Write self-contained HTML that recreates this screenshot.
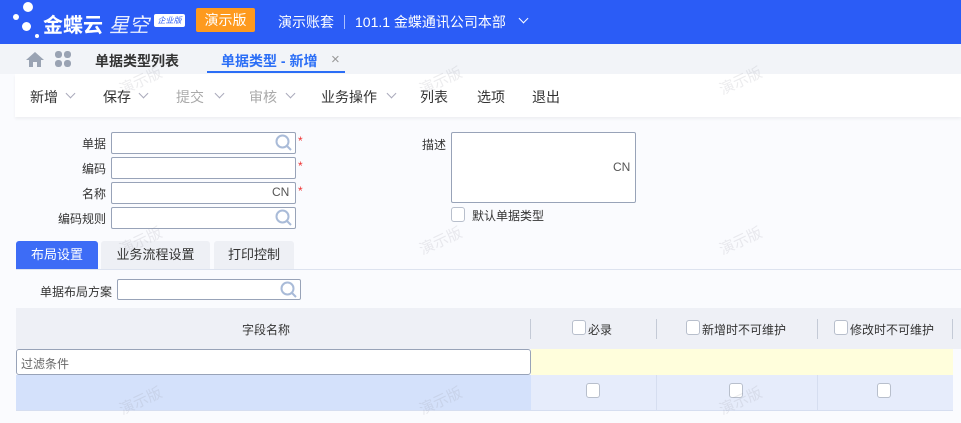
<!DOCTYPE html><html><head><meta charset="utf-8"><style>
*{box-sizing:border-box;margin:0;padding:0}
body{width:961px;height:423px;overflow:hidden;background:#fafbfe;font-family:"Liberation Sans","Noto Sans CJK SC",sans-serif;font-size:13px;color:#333;position:relative}
.a{position:absolute}
.hdr{left:0;top:0;width:961px;height:44px;background:#2b5cf6}
.w{color:#fff}
.inp{position:absolute;height:22px;border:1px solid #98a3b8;border-radius:2px;background:#fff}
.lbl{position:absolute;font-size:12px;text-align:right;color:#333}
.star{position:absolute;color:#e33;font-size:12px}
.chev{position:absolute;width:7px;height:7px;border-right:1px solid #aab;border-bottom:1px solid #aab;transform:rotate(45deg)}
.cb{position:absolute;width:14px;height:15px;border:1px solid #b8bfcc;border-radius:3px;background:#fff}
.wm{position:absolute;color:rgba(150,150,160,.18);font-size:15px;transform:rotate(-25deg)}
.mag{position:absolute;width:17px;height:17px}
.tb{position:absolute;top:87px;font-size:14px}
</style></head><body>
<div class="a hdr"></div>
<div class="a" style="left:23px;top:2px;width:10px;height:10px;border-radius:50%;background:#fff"></div>
<div class="a" style="left:13px;top:14px;width:6px;height:6px;border-radius:50%;background:#fff"></div>
<div class="a" style="left:22px;top:22px;width:9px;height:9px;border-radius:50%;background:#fff"></div>
<div class="a" style="left:35px;top:34px;width:4px;height:4px;border-radius:50%;background:#fff"></div>
<div class="a w" style="left:43px;top:9px;font-size:20px;font-weight:bold">金蝶云</div>
<div class="a w" style="left:109px;top:9px;font-size:20px;font-style:italic;opacity:.9">星空</div>
<div class="a" style="left:154px;top:14px;width:31px;height:13px;background:#fff;color:#2b5cf6;font-size:8px;line-height:13px;text-align:center;font-style:italic;border-radius:2px">企业版</div>
<div class="a w" style="left:196px;top:8px;width:59px;height:24px;background:#fe9a1e;border-radius:2px;text-align:center;line-height:24px;font-size:14px">演示版</div>
<div class="a w" style="left:278px;top:12px;font-size:14px">演示账套</div>
<div class="a" style="left:344px;top:15px;width:1px;height:14px;background:#aac0ff"></div>
<div class="a w" style="left:355px;top:12px;font-size:14px">101.1 金蝶通讯公司本部</div>
<div class="chev" style="left:520px;top:15px;border-color:#fff"></div>
<div class="a" style="left:0;top:44px;width:961px;height:30px;background:#f2f4f8"></div>
<svg class="a" style="left:26px;top:52px" width="18" height="15" viewBox="0 0 18 15"><path d="M9 0L0 8h3v7h4v-5h4v5h4V8h3z" fill="#9aa3b3"/></svg>
<svg class="a" style="left:55px;top:51px" width="16" height="16" viewBox="0 0 16 16" fill="#9aa3b3"><rect x="0" y="0" width="7" height="7" rx="3"/><rect x="9" y="0" width="7" height="7" rx="3"/><rect x="0" y="9" width="7" height="7" rx="3"/><rect x="9" y="9" width="7" height="7" rx="3"/></svg>
<div class="a" style="left:95px;top:51px;font-size:14px;font-weight:bold;color:#333">单据类型列表</div>
<div class="a" style="left:221px;top:51px;font-size:14px;font-weight:bold;color:#2b6ef6">单据类型 - 新增</div>
<div class="a" style="left:331px;top:51px;font-size:15px;color:#999">×</div>
<div class="a" style="left:207px;top:71px;width:138px;height:2px;background:#2b6ef6"></div>
<div class="a" style="left:15px;top:74px;width:946px;height:43px;background:#fff;box-shadow:0 2px 3px rgba(0,0,0,.05)"></div>
<div class="tb" style="left:30px">新增</div><div class="chev" style="left:67px;top:90px"></div>
<div class="tb" style="left:103px">保存</div><div class="chev" style="left:140px;top:90px"></div>
<div class="tb" style="left:176px;color:#aaa">提交</div><div class="chev" style="left:216px;top:90px"></div>
<div class="tb" style="left:249px;color:#aaa">审核</div><div class="chev" style="left:287px;top:90px"></div>
<div class="tb" style="left:321px">业务操作</div><div class="chev" style="left:388px;top:90px"></div>
<div class="tb" style="left:420px">列表</div>
<div class="tb" style="left:477px">选项</div>
<div class="tb" style="left:532px">退出</div>
<div class="lbl" style="left:40px;top:135px;width:66px">单据</div>
<div class="lbl" style="left:40px;top:160px;width:66px">编码</div>
<div class="lbl" style="left:40px;top:185px;width:66px">名称</div>
<div class="lbl" style="left:40px;top:210px;width:66px">编码规则</div>
<div class="inp" style="left:111px;top:132px;width:185px"></div>
<div class="inp" style="left:111px;top:157px;width:185px"></div>
<div class="inp" style="left:111px;top:182px;width:185px"></div>
<div class="inp" style="left:111px;top:207px;width:185px"></div>
<svg class="mag" style="left:275px;top:134px" viewBox="0 0 17 17"><circle cx="7.5" cy="7.5" r="6" fill="none" stroke="#a9bbd8" stroke-width="2"/><path d="M12 12l4 4" stroke="#a9bbd8" stroke-width="2"/></svg>
<svg class="mag" style="left:275px;top:209px" viewBox="0 0 17 17"><circle cx="7.5" cy="7.5" r="6" fill="none" stroke="#a9bbd8" stroke-width="2"/><path d="M12 12l4 4" stroke="#a9bbd8" stroke-width="2"/></svg>
<div class="a" style="left:272px;top:185px;font-size:12px;color:#555">CN</div>
<div class="star" style="left:298px;top:134px">*</div>
<div class="star" style="left:298px;top:159px">*</div>
<div class="star" style="left:298px;top:184px">*</div>
<div class="lbl" style="left:410px;top:136px;width:36px">描述</div>
<div class="inp" style="left:451px;top:132px;width:185px;height:71px"></div>
<div class="a" style="left:613px;top:160px;font-size:12px;color:#555">CN</div>
<div class="cb" style="left:451px;top:207px"></div>
<div class="a" style="left:472px;top:207px;font-size:12px">默认单据类型</div>
<div class="a" style="left:16px;top:241px;width:82px;height:28px;background:#3d6cf6;color:#fff;text-align:center;line-height:28px;font-size:13px;border-radius:3px 3px 0 0">布局设置</div>
<div class="a" style="left:101px;top:241px;width:109px;height:28px;background:#eef0f5;text-align:center;line-height:28px;font-size:13px;border-radius:3px 3px 0 0">业务流程设置</div>
<div class="a" style="left:214px;top:241px;width:80px;height:28px;background:#eef0f5;text-align:center;line-height:28px;font-size:13px;border-radius:3px 3px 0 0">打印控制</div>
<div class="a" style="left:16px;top:269px;width:945px;height:1px;background:#dde3ef"></div>
<div class="lbl" style="left:20px;top:283px;width:92px">单据布局方案</div>
<div class="inp" style="left:117px;top:279px;width:184px;height:21px"></div>
<svg class="mag" style="left:280px;top:281px" viewBox="0 0 17 17"><circle cx="7.5" cy="7.5" r="6" fill="none" stroke="#a9bbd8" stroke-width="2"/><path d="M12 12l4 4" stroke="#a9bbd8" stroke-width="2"/></svg>
<div class="a" style="left:16px;top:308px;width:945px;height:41px;background:#eef0f6"></div>
<div class="a" style="left:242px;top:321px;font-size:12px">字段名称</div>
<div class="a" style="left:530px;top:319px;width:1px;height:20px;background:#c4cad6"></div>
<div class="a" style="left:656px;top:319px;width:1px;height:20px;background:#c4cad6"></div>
<div class="a" style="left:817px;top:319px;width:1px;height:20px;background:#c4cad6"></div>
<div class="a" style="left:952px;top:319px;width:1px;height:20px;background:#c4cad6"></div>
<div class="cb" style="left:572px;top:320px"></div><div class="a" style="left:588px;top:321px;font-size:12px">必录</div>
<div class="cb" style="left:686px;top:320px"></div><div class="a" style="left:702px;top:321px;font-size:12px">新增时不可维护</div>
<div class="cb" style="left:834px;top:320px"></div><div class="a" style="left:850px;top:321px;font-size:12px">修改时不可维护</div>
<div class="a" style="left:16px;top:349px;width:515px;height:26px;background:#fff;border:1px solid #98a3b8;border-radius:3px"></div>
<div class="a" style="left:21px;top:355px;font-size:12px;color:#666">过滤条件</div>
<div class="a" style="left:531px;top:349px;width:422px;height:26px;background:#fffedc"></div>
<div class="a" style="left:16px;top:375px;width:515px;height:35px;background:#d4e1fb"></div>
<div class="a" style="left:531px;top:375px;width:422px;height:35px;background:#e6ecfb"></div>
<div class="a" style="left:656px;top:375px;width:1px;height:35px;background:#d6def0"></div>
<div class="a" style="left:817px;top:375px;width:1px;height:35px;background:#d6def0"></div>
<div class="a" style="left:16px;top:410px;width:937px;height:1px;background:#d6def0"></div>
<div class="cb" style="left:586px;top:383px"></div>
<div class="cb" style="left:729px;top:383px"></div>
<div class="cb" style="left:877px;top:383px"></div>
<div class="wm" style="left:118px;top:70px">演示版</div>
<div class="wm" style="left:418px;top:70px">演示版</div>
<div class="wm" style="left:718px;top:70px">演示版</div>
<div class="wm" style="left:118px;top:230px">演示版</div>
<div class="wm" style="left:418px;top:230px">演示版</div>
<div class="wm" style="left:718px;top:230px">演示版</div>
<div class="wm" style="left:118px;top:390px">演示版</div>
<div class="wm" style="left:418px;top:390px">演示版</div>
<div class="wm" style="left:718px;top:390px">演示版</div>
</body></html>
